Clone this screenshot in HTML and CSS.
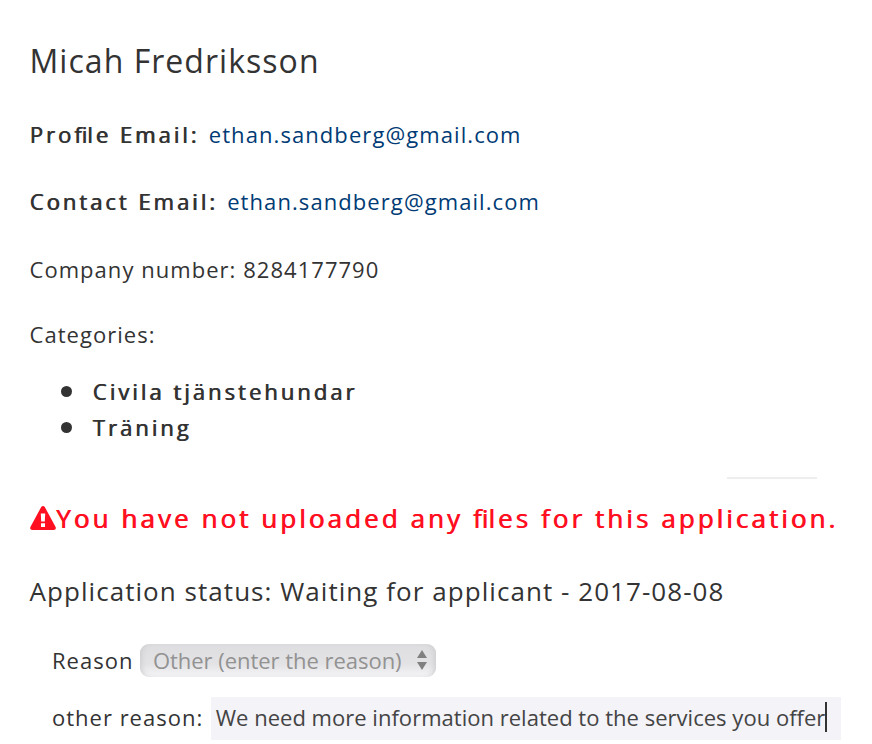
FILE: index.html
```html
<!DOCTYPE html>
<html lang="en">
<head>
<meta charset="utf-8">
<title>Application</title>
<link rel="stylesheet" href="styles.css">
</head>
<body>
<main class="application">
  <h1 class="name">Micah Fredriksson</h1>
  <p class="email profile"><strong>Pro<span class="tight">fi</span>le Email:</strong><a href="#">ethan.sandberg@gmail.com</a></p>
  <p class="email contact"><strong>Contact Email:</strong><a href="#">ethan.sandberg@gmail.com</a></p>
  <p class="company">Company number: 8284177790</p>
  <p class="categories">Categories:</p>
  <ul class="list">
    <li>Civila tjänstehundar</li>
    <li>Träning</li>
  </ul>
  <hr class="rule">
  <p class="warning"><svg class="warning-icon" viewBox="0 0 26 24"><path fill="currentColor" fill-rule="evenodd" d="M11.2 1Q13 -1 14.8 1L25.6 21Q26.6 24 23.6 24H2.4Q-.6 24 .4 21ZM10.8 7.5L11.2 15.5H14.8L15.2 7.5ZM11 17.2V21H15V17.2Z"/></svg><span>You have not uploaded any <span class="tight">fi</span>les for this application.</span></p>
  <h2 class="status">Application status: Waiting for applicant - 2017-08-08</h2>
  <div class="row reason"><span class="label">Reason</span><div class="select"><span>Other (enter the reason)</span><svg class="arrows" viewBox="0 0 12 20"><path fill="#808080" d="M1 8L6 0L11 8ZM1 12H11L6 20Z"/></svg></div></div>
  <div class="row other"><span class="label">other reason:</span><div class="field"><span>We need more information related to the services you offer</span><i class="caret"></i></div></div>
</main>
</body>
</html>
```
FILE: styles.css
```css
* { box-sizing: border-box; }
body { margin: 0; background: #fff; color: #333; font-family: "Open Sans", sans-serif; font-size: 22px; overflow: hidden; }
.application { height: 744px; padding: 36px 30px 0 29.5px; overflow: hidden; white-space: nowrap; }
h1, h2, p, ul, hr { margin: 0; font-weight: 400; }
.name { font-size: 32px; line-height: 50px; letter-spacing: 1.04px; }
.email, .company, .categories { line-height: 36px; letter-spacing: 1.04px; }
.email { display: flex; gap: 9.5px; }
.email strong, .list, .warning { font-weight: 400; text-shadow: .8px 0 currentColor; }
.email strong { letter-spacing: 2.98px; font-feature-settings: "liga" 1; }
.email a { color: #003b75; text-decoration: none; letter-spacing: 1.08px; }
.tight { letter-spacing: .2px; }
.profile { margin-top: 30px; }
.contact { margin-top: 31px; }
.company { margin-top: 32px; }
.categories { margin-top: 29px; }
.list { margin-top: 21px; padding-left: 63px; list-style: none; line-height: 36px; letter-spacing: 3.02px; }
.list li { display: flex; align-items: center; }
.list li::before { content: ""; width: 11px; height: 11px; margin: 0 21px 0 -32px; border-radius: 50%; background: #333; }
.rule { width: 90px; height: 2px; margin: 32px 25px 0 auto; border: 0; background: #eee; }
.warning { display: flex; align-items: center; margin-top: 19px; height: 40px; color: #ff0f1f; font-size: 26px; letter-spacing: 3.06px; font-feature-settings: "liga" 1; }
.warning-icon { width: 26px; height: 24px; flex: none; margin-right: .5px; }
.status { margin-top: 33px; font-size: 26px; line-height: 40px; letter-spacing: 1.05px; }
.row { display: flex; align-items: center; padding-left: 22.5px; }
.label { letter-spacing: 1px; }
.reason { height: 34px; margin-top: 32px; }
.select { display: flex; align-items: center; justify-content: space-between; width: 296px; height: 33px; margin-left: 7px; padding: 0 8px 0 12.5px; border-radius: 9px; background: linear-gradient(#dedee0, #e3e3e5 60%, #f5f5f7); box-shadow: inset 5px 0 6px -4px #c9c9cd, inset -5px 0 6px -4px #c9c9cd; color: #929292; }
.select span { letter-spacing: -.03px; }
.arrows { width: 12px; height: 20px; }
.other { height: 43px; margin-top: 20px; }
.other .label { padding-bottom: 4px; }
.field { display: flex; align-items: center; width: 630px; height: 43px; flex: none; margin-left: 7.5px; padding-left: 5px; background: #f3f3f8; color: #444; }
.field span { padding-bottom: 3px; letter-spacing: .02px; }
.caret { width: 2px; height: 30px; margin-top: -4px; background: #333; }
```
